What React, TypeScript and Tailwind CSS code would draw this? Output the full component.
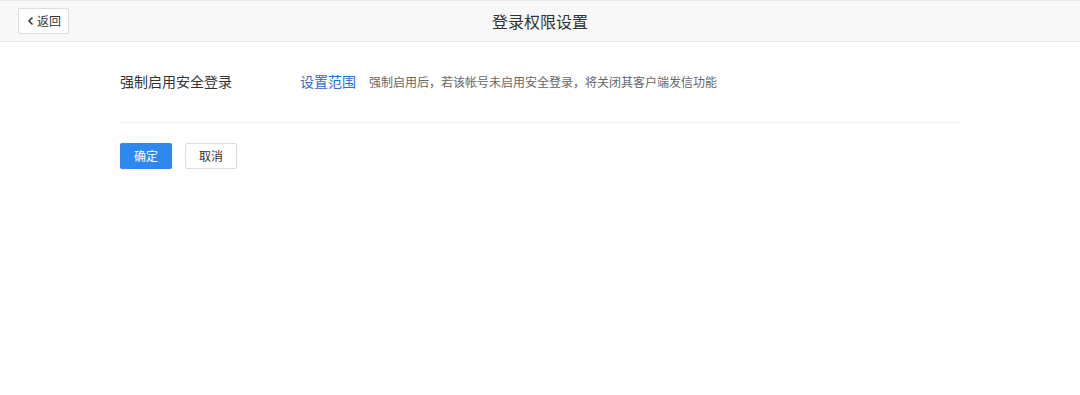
import React from 'react';

const App: React.FC = () => {
  return (
    <div
      className="w-[1080px] h-[395px] bg-white text-[#333]"
      style={{ fontFamily: '"Microsoft YaHei", "Noto Sans CJK SC", sans-serif' }}
    >
      {/* Header */}
      <div className="relative h-[42px] bg-[#f8f8f8] border-t border-b border-[#e8e8e8] flex items-center justify-center">
        <button className="absolute left-[18px] top-[7px] h-[26px] w-[51px] bg-white border border-[#ddd] rounded-[2px] flex items-center justify-center gap-[1px] text-[12px] text-[#333]">
          <svg width="10" height="10" viewBox="0 0 10 10" fill="none">
            <path d="M6.5 1.5L3 5l3.5 3.5" stroke="#333" strokeWidth="1.5" />
          </svg>
          <span>返回</span>
        </button>
        <h1 className="text-[16px] text-[#333] font-normal">登录权限设置</h1>
      </div>

      {/* Content */}
      <div className="w-[840px] mx-auto">
        <div className="flex items-center pb-[1px] h-[81px] border-b border-[#eee]">
          <div className="w-[180px] text-[14px] text-[#333]">强制启用安全登录</div>
          <a className="text-[14px] text-[#2a6bd0] cursor-pointer">设置范围</a>
          <span className="ml-[13px] text-[12px] text-[#666]">
            强制启用后，若该帐号未启用安全登录，将关闭其客户端发信功能
          </span>
        </div>
        <div className="flex gap-[13px] mt-[20px]">
          <button className="h-[26px] w-[52px] rounded-[2px] bg-[#2d89ef] text-white text-[12px]">确定</button>
          <button className="h-[26px] w-[52px] rounded-[2px] bg-white border border-[#ddd] text-[#333] text-[12px]">取消</button>
        </div>
      </div>
    </div>
  );
};

export default App;
